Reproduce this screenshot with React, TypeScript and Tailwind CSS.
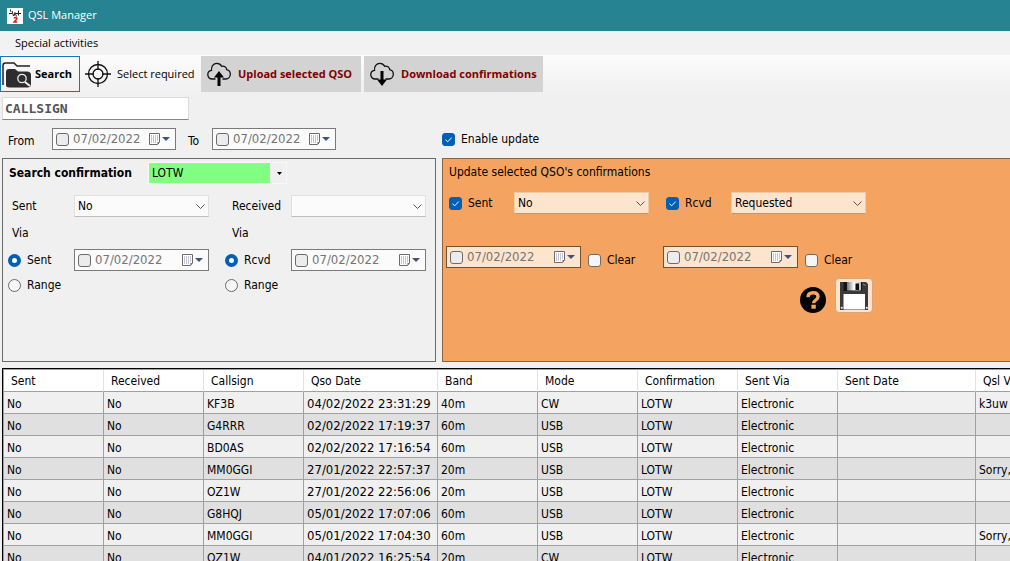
import React from "react";

const TAHOMA = "font-['DejaVu_Sans_Condensed','DejaVu_Sans',sans-serif] text-[12px]";
const SEGOE = "font-['Open_Sans',sans-serif] text-[11px]";

function LogoIcon() {
  return (
    <svg className="h-4 w-4" viewBox="0 0 16 16" fill="none">
      <path d="M0 0h16v16H0z" fill="#fff" />
      <path d="M2 5.500h3M3.500 1.500v2M5 3l1.500 5M7 8l1-3.500M8 4.500l1.500 4M9 5.500h5M11.500 2.500v5" stroke="#222" strokeWidth="1" />
      <path d="M7 10.500c.5-1.500 3-1.200 2.700.4C9.500 12 7.500 12.800 7 14h3" stroke="#d81a1a" strokeWidth="1.500" />
    </svg>
  );
}

function FolderSearchIcon() {
  return (
    <svg className="h-8 w-8 shrink-0" viewBox="0 0 32 32" fill="none">
      <path d="M2 27V7.500Q2 5 4.500 5H13l3 3h13" stroke="#222" strokeWidth="1.500" />
      <path d="M5 14q0-3 3-3h6l3 2.500h9q4 0 4 3.500v9q0 3.500-3.500 3.500h-18Q5 29.500 5 27z" fill="#2d2d2d" />
      <circle cx="21" cy="20.500" r="4.200" stroke="#eee" strokeWidth="1.300" />
      <path d="M24 24l5 4" stroke="#eee" strokeWidth="2" />
    </svg>
  );
}

function TargetIcon() {
  return (
    <svg className="h-[26px] w-[26px] shrink-0" viewBox="0 0 26 26" fill="none" stroke="#111" strokeWidth="1.300">
      <circle cx="13" cy="13" r="9.500" />
      <circle cx="13" cy="13" r="5" />
      <path d="M13 0v9M13 17v9M0 13h9M17 13h9" />
    </svg>
  );
}

function CloudIcon({ down = false }: { down?: boolean }) {
  return (
    <svg className="h-6 w-6 shrink-0" viewBox="0 0 24 24" fill="none">
      <path
        d="M8.500 17H5.200C2.500 17 .8 15 .8 12.600c0-2.300 1.600-3.900 3.700-4.200C4 4.500 6.500 1.400 9.800 1.400c2.200 0 3.900 1.100 4.800 2.900 2.500-.8 4.900.8 5.100 3.300 2.300.5 3.600 2.200 3.600 4.400 0 2.700-1.900 5-4.500 5h-3.300"
        stroke="#111"
        strokeWidth="1.300"
      />
      {down ? (
        <path d="M10.500 9h3v8.500H17L12 24l-5-6.500h3.500z" fill="#000" />
      ) : (
        <path d="M10.500 24h3v-8.500H17L12 9l-5 6.500h3.500z" fill="#000" />
      )}
    </svg>
  );
}

function HelpIcon() {
  return (
    <svg className="h-[26px] w-[26px]" viewBox="0 0 26 26" fill="none">
      <circle cx="13" cy="13" r="13" fill="#000" />
      <path d="M8 10.200C8 7 10 5.700 13.200 5.700c3 0 4.800 1.500 4.800 4 0 3.300-4.400 3.300-4.400 6.600" stroke="#f4a460" strokeWidth="3.400" />
      <path d="M11.400 17.700h4.400v4h-4.400z" fill="#f4a460" />
    </svg>
  );
}

function FloppyIcon() {
  return (
    <svg className="h-[30px] w-[30px]" viewBox="0 0 30 30">
      <defs>
        <linearGradient id="shutter">
          <stop offset="0" stopColor="#777" />
          <stop offset="0.500" stopColor="#fff" />
          <stop offset="1" stopColor="#bbb" />
        </linearGradient>
      </defs>
      <path d="M1 1h26l2 2v26H1z" fill="#3a3a3a" />
      <path d="M4.500 1H23v9H4.500z" fill="#151515" />
      <path d="M8 1h14v8.500H8z" fill="url(#shutter)" />
      <path d="M16.500 2.500h3.500v6.500h-3.500z" fill="#111" />
      <path d="M4.500 13H26v15.500H4.500z" fill="#fff" />
      <path d="M24 3l3 1.500M2 26h1.500v1.500H2zM27 26h1.500v1.500H27z" fill="#ddd" stroke="#ddd" strokeWidth="0.500" />
    </svg>
  );
}

function CheckBox({ label, checked = false }: { label: string; checked?: boolean }) {
  return (
    <label className="flex items-center gap-[6px] leading-4">
      <span className="relative flex">
        <input
          type="checkbox"
          defaultChecked={checked}
          className="peer h-[13px] w-[13px] appearance-none rounded-[3px] border border-[#6b6b6b] bg-[#f6f6f6] checked:border-[#005fb8] checked:bg-[#005fb8]"
        />
        <svg className="pointer-events-none absolute inset-0 hidden h-[13px] w-[13px] peer-checked:block" viewBox="0 0 13 13" fill="none">
          <path d="M3.500 6.700l2.200 2.100 4-4.200" stroke="#fff" strokeWidth="1" />
        </svg>
      </span>
      {label}
    </label>
  );
}

function Radio({ name, label, checked = false }: { name: string; label: string; checked?: boolean }) {
  return (
    <label className="flex items-center gap-[6px] leading-4">
      <input
        type="radio"
        name={name}
        defaultChecked={checked}
        className="h-[13px] w-[13px] appearance-none rounded-full border border-[#6b6b6b] bg-[#f6f6f6] checked:border-4 checked:border-[#005fb8] checked:bg-white"
      />
      {label}
    </label>
  );
}

function DatePicker({ label, warm = false, narrow = false }: { label: string; warm?: boolean; narrow?: boolean }) {
  return (
    <div
      className={`flex h-[22px] items-center border pl-[3px] pr-[5px] ${narrow ? "w-[124px]" : "w-[135px]"} ${
        warm ? "border-[#6e5238] bg-[#fde4cf]" : "border-[#7a7a7a] bg-[#fbfbfb]"
      }`}
    >
      <input
        type="checkbox"
        aria-label={`Use ${label}`}
        className="h-[13px] w-[13px] shrink-0 appearance-none rounded-[3px] border border-[#6b6b6b] bg-[#ececec]"
      />
      <input
        aria-label={label}
        defaultValue="07/02/2022"
        className="ml-1 min-w-0 flex-1 bg-transparent text-[13px] leading-4 text-[#757575] outline-none"
      />
      <button aria-label={`Open ${label}`} className="flex items-center gap-px">
        <svg className="h-3 w-3" viewBox="0 0 12 12" fill="none">
          <path d="M.5.500h10v8.500l-2 2.500H.5z" fill="#fff" stroke="#6f6a68" />
          <path d="M2 2.500h1v1H2zM4 2.500h1v1H4zM6 2.500h1v1H6zM8 2.500h1v1H8zM2 4.500h1v1H2zM4 4.500h1v1H4zM6 4.500h1v1H6zM8 4.500h1v1H8zM2 6.500h1v1H2zM4 6.500h1v1H4zM6 6.500h1v1H6zM8 6.500h1v1H8zM2 8.500h1v1H2zM4 8.500h1v1H4zM6 8.500h1v1H6z" fill="#8790a8" />
          <path d="M8.500 11.500V9h2z" fill="#666" />
        </svg>
        <svg className="h-1 w-2" viewBox="0 0 8 4">
          <path d="M0 0h8L4 4z" fill="#3f5379" />
        </svg>
      </button>
    </div>
  );
}

function Select({ label, value, warm = false }: { label: string; value: string; warm?: boolean }) {
  return (
    <div className="relative w-[135px]">
      <select
        aria-label={label}
        defaultValue={value}
        className={`block h-[22px] w-full appearance-none border pl-[3px] leading-4 outline-none ${
          warm ? "border-[#f0c9a5] border-b-[#c89468] bg-[#fde4cf]" : "border-[#e0e0e0] border-b-[#bdbdbd] bg-[#fbfbfb]"
        }`}
      >
        <option value={value}>{value}</option>
      </select>
      <svg className="pointer-events-none absolute right-1 top-[9px] h-[5px] w-[9px]" viewBox="0 0 9 5" fill="none">
        <path d="M.5.500l4 4 4-4" stroke="#555" />
      </svg>
    </div>
  );
}

function FilterColumn({ title, value, radio, indent }: { title: string; value: string; radio: string; indent: string }) {
  return (
    <div className="w-[217px] shrink-0 pl-[5px]">
      <div className="flex items-center">
        <span className={`w-[66px] ${indent}`}>{title}</span>
        <Select label={title} value={value} />
      </div>
      <div className={`mt-2 leading-4 ${indent}`}>Via</div>
      <div className="mt-2 flex items-center">
        <div className="w-[66px]">
          <Radio name={title} label={radio} checked />
        </div>
        <DatePicker label={`${title} date`} />
      </div>
      <div className="mt-[6px]">
        <Radio name={title} label="Range" />
      </div>
    </div>
  );
}

function UpdateColumn({ title, value }: { title: string; value: string }) {
  return (
    <div className="w-[217px]">
      <div className="flex items-center pl-[3px]">
        <div className="w-[65px]">
          <CheckBox label={title} checked />
        </div>
        <Select label={`New ${title}`} value={value} warm />
      </div>
      <div className="mt-8 flex">
        <DatePicker label={`New ${title} date`} warm />
        <div className="ml-[7px] pt-[6px]">
          <CheckBox label="Clear" />
        </div>
      </div>
    </div>
  );
}

const columns = [
  { name: "Sent", width: "w-[100px]" },
  { name: "Received", width: "w-[100px]" },
  { name: "Callsign", width: "w-[100px]" },
  { name: "Qso Date", width: "w-[134px]" },
  { name: "Band", width: "w-[100px]" },
  { name: "Mode", width: "w-[100px]" },
  { name: "Confirmation", width: "w-[100px]" },
  { name: "Sent Via", width: "w-[100px]" },
  { name: "Sent Date", width: "w-[138px]" },
  { name: "Qsl V", width: "" },
];

const rows = [
  ["KF3B", "04/02/2022 23:31:29", "40m", "CW", "k3uw"],
  ["G4RRR", "02/02/2022 17:19:37", "60m", "USB", ""],
  ["BD0AS", "02/02/2022 17:16:54", "60m", "USB", ""],
  ["MM0GGI", "27/01/2022 22:57:37", "20m", "USB", "Sorry,"],
  ["OZ1W", "27/01/2022 22:56:06", "20m", "USB", ""],
  ["G8HQJ", "05/01/2022 17:07:06", "60m", "USB", ""],
  ["MM0GGI", "05/01/2022 17:04:30", "60m", "USB", "Sorry,"],
  ["OZ1W", "04/01/2022 16:25:54", "20m", "CW", ""],
];

function QsoTable() {
  return (
    <div className="ml-[2px] mt-[6px] overflow-hidden border-l border-t border-black">
      <table className="w-full table-fixed border-separate border-spacing-0 border-l border-t border-[#a0a0a0]">
        <thead>
          <tr className="h-[22px] bg-white text-left">
            {columns.map((c) => (
              <th
                key={c.name}
                className={`${c.width} whitespace-nowrap border-b border-r border-b-[#a0a0a0] border-r-[#e2e2e2] py-0 pl-[7px] pr-0 font-normal last:border-r-0`}
              >
                {c.name}
              </th>
            ))}
          </tr>
        </thead>
        <tbody>
          {rows.map(([call, date, band, mode, note], i) => (
            <tr key={date} className={`h-[22px] ${i % 2 ? "bg-[#e0e0e0]" : "bg-[#f0f0f0]"}`}>
              {["No", "No", call, date, band, mode, "LOTW", "Electronic", "", note].map((cell, j) => (
                <td
                  key={j}
                  className={`overflow-hidden whitespace-nowrap border-b border-r border-[#a0a0a0] pb-0 pl-[3px] pr-0 pt-[2px] leading-4 last:border-r-0 ${
                    j === 3 ? "text-[13px]" : "text-[12px]"
                  }`}
                >
                  {cell}
                </td>
              ))}
            </tr>
          ))}
        </tbody>
      </table>
    </div>
  );
}

export default function App() {
  return (
    <div className={`flex h-screen flex-col overflow-hidden bg-[#f0f0f0] text-black ${TAHOMA}`}>
      <header className={`flex h-[31px] shrink-0 items-center gap-[5px] bg-[#268391] pl-[7px] text-white ${SEGOE}`}>
        <LogoIcon />
        <h1>QSL Manager</h1>
      </header>

      <nav className={`flex h-6 shrink-0 items-center bg-[#f2f2f2] pl-[15px] ${SEGOE}`}>
        <button>Special activities</button>
      </nav>

      <div className={`flex h-[38px] shrink-0 items-start bg-linear-to-b from-[#fcfcfc] to-[#f0f0f0] pt-px ${SEGOE}`}>
        <button className="flex h-9 w-20 items-center gap-[2px] border border-[#1a74b8] font-bold whitespace-nowrap">
          <FolderSearchIcon />
          Search
        </button>
        <button className="flex h-9 w-[121px] items-center gap-[6px] pl-[5px] whitespace-nowrap">
          <TargetIcon />
          Select required
        </button>
        <button className="mr-[3px] flex h-9 w-40 items-center gap-[7px] bg-[#d3d3d3] pl-[6px] font-bold whitespace-nowrap text-[#800000]">
          <CloudIcon />
          Upload selected QSO
        </button>
        <button className="flex h-9 w-[179px] items-center gap-[7px] bg-[#d3d3d3] pl-[6px] font-bold whitespace-nowrap text-[#800000]">
          <CloudIcon down />
          Download confirmations
        </button>
      </div>

      <main className="grid shrink-0 grid-cols-[434px_minmax(0,1fr)] gap-x-[6px] gap-y-2 pl-[2px] pt-1">
        <section>
          <input
            aria-label="Callsign"
            placeholder="CALLSIGN"
            className="block h-[23px] w-[187px] border border-[#dcdcdc] border-b-[#868686] bg-white px-[2px] font-['DejaVu_Sans_Mono',monospace] text-[13px] font-bold outline-none placeholder:text-[#555]"
          />
          <div className="mt-2 flex items-center">
            <span className="w-[50px] pl-[6px] pt-1">From</span>
            <DatePicker label="From date" narrow />
            <span className="w-9 pl-3 pt-1">To</span>
            <DatePicker label="To date" narrow />
          </div>
        </section>
        <section className="flex items-end pb-[3px]">
          <CheckBox label="Enable update" checked />
        </section>

        <section className="h-[204px] border border-[#6a6a6a]">
          <div className="mt-[3px] flex items-center">
            <h2 className="w-[145px] whitespace-nowrap pl-[6px] font-bold">Search confirmation</h2>
            <div className="relative w-[139px]">
              <select
                aria-label="Confirmation type"
                defaultValue="LOTW"
                className="block h-[22px] w-full appearance-none border border-[#f8f8f8] bg-linear-to-r from-[#80ff80] from-[121px] to-[#f0f0f0] to-[121px] pl-[3px] leading-4 outline-none"
              >
                <option>LOTW</option>
              </select>
              <svg className="pointer-events-none absolute right-[5px] top-[10px] h-[3px] w-[5px]" viewBox="0 0 5 3">
                <path d="M0 0h5L2.500 3z" fill="#000" />
              </svg>
            </div>
          </div>
          <div className="mt-[11px] flex">
            <FilterColumn title="Sent" value="No" radio="Sent" indent="pl-1" />
            <FilterColumn title="Received" value="" radio="Rcvd" indent="pl-[7px]" />
          </div>
        </section>

        <section className="h-[204px] border-y border-l border-[#8a6544] bg-[#f4a460] pl-[3px]">
          <h2 className="mt-[5px] pl-[3px] leading-4">Update selected QSO's confirmations</h2>
          <div className="mt-3 flex">
            <UpdateColumn title="Sent" value="No" />
            <UpdateColumn title="Rcvd" value="Requested" />
          </div>
          <div className="mt-[10px] flex w-[427px] items-center justify-end gap-[9px]">
            <button aria-label="Help" className="mt-2">
              <HelpIcon />
            </button>
            <button aria-label="Save" className="flex h-[35px] w-[38px] items-center justify-center rounded-[4px] border border-[#d9a478] bg-[#fde4cf]">
              <FloppyIcon />
            </button>
          </div>
        </section>
      </main>

      <QsoTable />
    </div>
  );
}
